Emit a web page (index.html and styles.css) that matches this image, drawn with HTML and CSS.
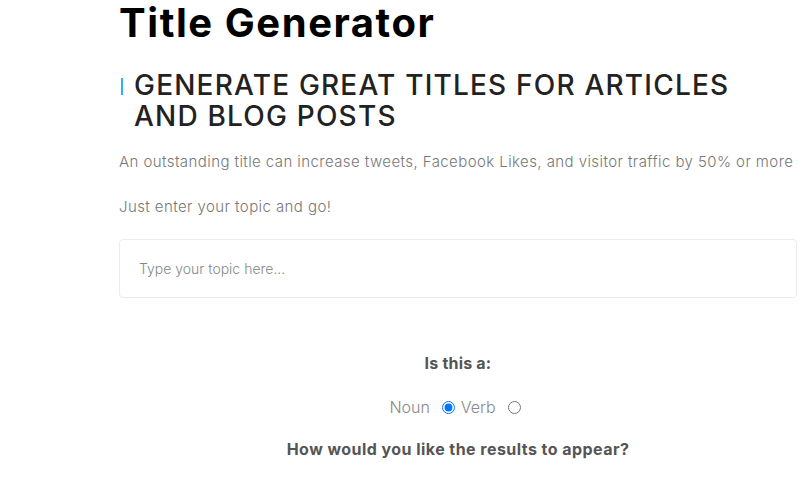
FILE: index.html
```html
<!DOCTYPE html>
<html lang="en">
<head>
<meta charset="utf-8">
<title>Title Generator</title>
<link rel="stylesheet" href="styles.css">
</head>
<body>
<main class="page">
  <h1 class="title">Title Generator</h1>
  <h2 class="subtitle"><span class="accent"></span><span class="subtitle-text">GENERATE GREAT TITLES FOR ARTICLES AND BLOG POSTS</span></h2>
  <p class="lead">An outstanding title can increase tweets, Facebook Likes, and visitor traffic by 50% or more</p>
  <p class="lead lead-2">Just enter your topic and go!</p>
  <div class="topic-box">
    <input class="topic-input" type="text" placeholder="Type your topic here...">
  </div>
  <div class="question">Is this a:</div>
  <div class="choice-row">
    <label class="choice-label" for="noun">Noun</label>
    <input class="radio" type="radio" name="kind" id="noun" checked>
    <label class="choice-label" for="verb">Verb</label>
    <input class="radio" type="radio" name="kind" id="verb">
  </div>
  <div class="question question-2">How would you like the results to appear?</div>
</main>
</body>
</html>
```
FILE: styles.css
```css
html, body {
  margin: 0;
  padding: 0;
  background: #ffffff;
}
body {
  font-family: Inter, "Open Sans", sans-serif;
  overflow: hidden;
}
.page {
  width: 678px;
  margin-left: 119px;
  padding-top: 3px;
}
.title {
  margin: 0;
  font-size: 40px;
  line-height: 40px;
  font-weight: 700;
  letter-spacing: 1.55px;
  color: #000;
}
.subtitle {
  margin: 27px 0 0;
  display: flex;
  align-items: flex-start;
  font-size: 28px;
  line-height: 31px;
  font-weight: 500;
  letter-spacing: 1.2px;
  color: #222;
}
.accent {
  flex: none;
  width: 2px;
  height: 17px;
  margin: 8px 11px 0 2px;
  background: #29b6f0;
}
.subtitle-text {
  width: 620px;
}
.lead {
  margin: 18px 0 0;
  font-size: 15px;
  line-height: 24px;
  font-weight: 300;
  letter-spacing: 0.42px;
  white-space: nowrap;
  color: #777;
}
.lead-2 {
  margin-top: 21px;
}
.topic-box {
  margin-top: 20px;
  height: 59px;
  box-sizing: border-box;
  border: 1px solid #ececec;
  border-radius: 4px;
  display: flex;
  align-items: center;
}
.topic-input {
  flex: 1;
  border: none;
  outline: none;
  background: transparent;
  padding: 0 19px;
  font-family: inherit;
  font-size: 14px;
  font-weight: 300;
  color: #333;
}
.topic-input::placeholder {
  color: #888;
}
.question {
  margin-top: 55px;
  text-align: center;
  font-size: 16px;
  line-height: 20px;
  font-weight: 700;
  letter-spacing: 0.2px;
  color: #555;
}
.choice-row {
  margin-top: 22px;
  display: flex;
  justify-content: center;
  align-items: center;
  height: 24px;
}
.choice-label {
  font-size: 16px;
  font-weight: 300;
  color: #888;
}
.radio {
  margin: 0 6px 0 12px;
  width: 13px;
  height: 13px;
}
.question-2 {
  margin-top: 20px;
  letter-spacing: 0.45px;
}
```
